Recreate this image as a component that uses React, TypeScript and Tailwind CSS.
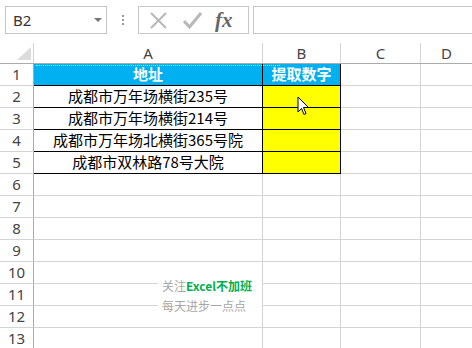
import React from "react";

const font = { fontFamily: '"Noto Sans", "Noto Sans CJK SC", sans-serif' };
const cjk = { fontFamily: '"Noto Sans CJK SC", "Noto Sans", sans-serif' };

const data = [
  "成都市万年场横街235号",
  "成都市万年场横街214号",
  "成都市万年场北横街365号院",
  "成都市双林路78号大院",
];

function RowHead({ n }: { n: number }) {
  return (
    <div className="w-[34px] h-[22px] shrink-0 border-r border-b border-r-[#ababab] border-b-[#d4d4d4] flex items-center justify-center text-[15px] text-[#444]">
      {n}
    </div>
  );
}

export default function App() {
  const rows: React.ReactNode[] = [];
  rows.push(
    <div key={1} className="flex h-[22px]">
      <RowHead n={1} />
      <div className="w-[229px] shrink-0 bg-[#00b0f0] border-r border-b border-black flex items-center justify-center text-white font-bold text-[15px] relative" style={cjk}>
        <div className="absolute left-[2px] right-0 top-[1px] border-t border-dotted border-[#9fe3fb]" />
        地址
      </div>
      <div className="w-[78px] shrink-0 bg-[#00b0f0] border-r border-b border-black flex items-center justify-center text-white font-bold text-[15px] relative" style={cjk}>
        <div className="absolute left-0 right-[60px] top-[1px] border-t border-dotted border-[#9fe3fb]" />
        提取数字
      </div>
      <div className="w-[80px] shrink-0 border-r border-b border-[#d4d4d4]" />
      <div className="flex-1 border-b border-[#d4d4d4]" />
    </div>
  );
  data.forEach((t, i) => {
    rows.push(
      <div key={i + 2} className="flex h-[22px]">
        <RowHead n={i + 2} />
        <div className="w-[229px] shrink-0 border-r border-b border-black flex items-center justify-center text-black text-[15px]" style={cjk}>
          {t}
        </div>
        <div className="w-[78px] shrink-0 bg-[#ffff00] border-r border-b border-black" />
        <div className="w-[80px] shrink-0 border-r border-b border-[#d4d4d4]" />
        <div className="flex-1 border-b border-[#d4d4d4]" />
      </div>
    );
  });
  for (let n = 6; n <= 13; n++) {
    rows.push(
      <div key={n} className="flex h-[22px]">
        <RowHead n={n} />
        <div className="w-[229px] shrink-0 border-r border-b border-[#d4d4d4]" />
        <div className="w-[78px] shrink-0 border-r border-b border-[#d4d4d4]" />
        <div className="w-[80px] shrink-0 border-r border-b border-[#d4d4d4]" />
        <div className="flex-1 border-b border-[#d4d4d4]" />
      </div>
    );
  }

  return (
    <div className="w-[472px] h-[348px] bg-white overflow-hidden relative" style={font}>
      <div className="h-[43px] flex items-start pt-[6px] pl-[5px]">
        <div className="w-[102px] h-[28px] border border-[#c6c6c6] flex items-center pl-[7px] relative text-[15px] text-[#333]">
          B2
          <svg className="absolute left-[88px] top-[11px]" width="8" height="5" viewBox="0 0 8 5">
            <path d="M0 0 L8 0 L4 4 Z" fill="#777" />
          </svg>
        </div>
        <div className="w-[31px] h-[28px] flex flex-col items-center justify-center gap-[2px]">
          <div className="w-[2px] h-[2px] bg-[#999]" />
          <div className="w-[2px] h-[2px] bg-[#999]" />
          <div className="w-[2px] h-[2px] bg-[#999]" />
        </div>
        <div className="w-[111px] h-[28px] border border-[#c6c6c6] flex items-center">
          <svg className="ml-[11px]" width="17" height="17" viewBox="0 0 17 17">
            <path d="M1 1 L16 16 M16 1 L1 16" stroke="#b8b8b8" strokeWidth="2" />
          </svg>
          <svg className="ml-[16px]" width="19" height="17" viewBox="0 0 19 17">
            <path d="M1 9 L6.5 15 L18 1" stroke="#b8b8b8" strokeWidth="3" fill="none" />
          </svg>
          <span className="ml-[13px] text-[21px] italic font-bold text-[#666] leading-none" style={{ fontFamily: '"Liberation Serif", serif' }}>
            fx
          </span>
        </div>
        <div className="ml-[4px] flex-1 h-[28px] border border-[#c6c6c6] border-r-0" />
      </div>
      <div className="flex h-[21px] border-b border-[#ababab]">
        <div className="w-[34px] shrink-0 border-r border-[#d4d4d4] relative">
          <svg className="absolute left-[17px] top-[4px]" width="14" height="13" viewBox="0 0 14 13">
            <path d="M14 0 L14 13 L0 13 Z" fill="#dcdcdc" />
          </svg>
        </div>
        {[
          ["A", "w-[229px]"],
          ["B", "w-[78px]"],
          ["C", "w-[80px]"],
        ].map(([l, w]) => (
          <div key={l} className={`${w} shrink-0 border-r border-[#d4d4d4] flex items-center justify-center text-[15px] text-[#444]`}>
            {l}
          </div>
        ))}
        <div className="flex-1 flex items-center justify-center text-[15px] text-[#444]">D</div>
      </div>
      <div>{rows}</div>
      <div className="absolute left-[158px] top-[262px] w-[104px] h-[64px] bg-white flex flex-col justify-center pl-[4px] pt-[4px] gap-[4px] text-[12px] leading-[16px]" style={cjk}>
        <div className="text-[#a6a6a6]">
          关注<span className="text-[#00b050] font-bold">Excel不加班</span>
        </div>
        <div className="text-[#a6a6a6]">每天进步一点点</div>
      </div>
      <svg className="absolute left-[297px] top-[96px]" width="14" height="21" viewBox="0 0 14 21">
        <path d="M1 1 L1 16 L4.5 12.5 L7 18.5 L9 17.5 L6.5 11.5 L11.5 11.5 Z" fill="white" stroke="black" strokeWidth="1" strokeLinejoin="miter" />
      </svg>
    </div>
  );
}
